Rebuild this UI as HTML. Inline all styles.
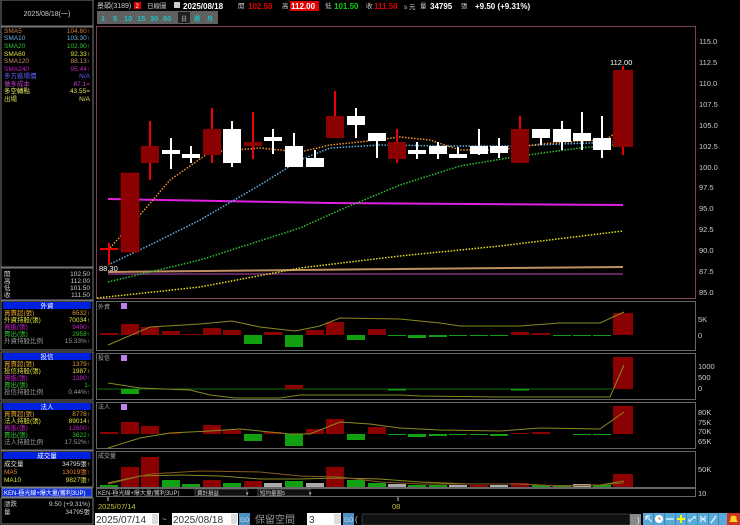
<!DOCTYPE html>
<html><head><meta charset="utf-8"><style>
html,body{margin:0;padding:0;background:#000;width:740px;height:525px;overflow:hidden}
svg{display:block}
text{font-family:"Liberation Sans","Noto Sans CJK TC",sans-serif}
</style></head><body>
<svg width="740" height="525" viewBox="0 0 740 525" xmlns="http://www.w3.org/2000/svg">
<rect width="740" height="525" fill="#000"/>
<!-- left panel -->
<rect x="1" y="0" width="92" height="26" fill="#000" stroke="#777"/>
<text x="47" y="16" fill="#ccc" font-size="7" text-anchor="middle">2025/08/18(一)</text>
<rect x="1" y="27" width="92" height="240" fill="#000" stroke="#777"/>
<g font-size="6.5">
<text x="4" y="33" fill="#d08040">SMA5</text><text x="90" y="33" fill="#d08040" text-anchor="end">104.60↑</text>
<text x="4" y="40" fill="#6ab0e0">SMA10</text><text x="90" y="40" fill="#6ab0e0" text-anchor="end">103.30↑</text>
<text x="4" y="48" fill="#30c030">SMA20</text><text x="90" y="48" fill="#30c030" text-anchor="end">102.90↑</text>
<text x="4" y="56" fill="#e0e040">SMA60</text><text x="90" y="56" fill="#e0e040" text-anchor="end">92.33↑</text>
<text x="4" y="63" fill="#c09060">SMA120</text><text x="90" y="63" fill="#c09060" text-anchor="end">88.13↑</text>
<text x="4" y="71" fill="#c020c0">SMA240</text><text x="90" y="71" fill="#c020c0" text-anchor="end">95.44↑</text>
<text x="4" y="78" fill="#6060ff">多方進場價</text><text x="90" y="78" fill="#6060ff" text-anchor="end">N/A</text>
<text x="4" y="86" fill="#c040c0">做多成本</text><text x="90" y="86" fill="#c040c0" text-anchor="end">87.1=</text>
<text x="4" y="93" fill="#e0e060">多空轉點</text><text x="90" y="93" fill="#e0e060" text-anchor="end">43.55=</text>
<text x="4" y="101" fill="#e0e060">出場</text><text x="90" y="101" fill="#e0e060" text-anchor="end">N/A</text>
</g>
<rect x="1" y="268" width="92" height="32" fill="#000" stroke="#777"/>
<g font-size="6.5" fill="#ccc">
<text x="4" y="276">開</text><text x="90" y="276" text-anchor="end">102.50</text>
<text x="4" y="283">高</text><text x="90" y="283" text-anchor="end">112.00</text>
<text x="4" y="290">低</text><text x="90" y="290" text-anchor="end">101.50</text>
<text x="4" y="297">收</text><text x="90" y="297" text-anchor="end">111.50</text>
</g>
<!-- 外資 -->
<rect x="1" y="301" width="92" height="49" fill="#000" stroke="#777"/>
<rect x="3" y="302" width="88" height="7" fill="#0020e0"/>
<text x="47" y="308" fill="#fff" font-size="6.5" text-anchor="middle">外資</text>
<g font-size="6.5">
<text x="4" y="315" fill="#e0a030">買賣超(張)</text><text x="90" y="315" fill="#e0a030" text-anchor="end">6532↑</text>
<text x="4" y="322" fill="#e0e040">外資持股(張)</text><text x="90" y="322" fill="#e0e040" text-anchor="end">70034↑</text>
<text x="4" y="329" fill="#c020c0">買進(張)</text><text x="90" y="329" fill="#c020c0" text-anchor="end">9490↑</text>
<text x="4" y="336" fill="#30c030">賣出(張)</text><text x="90" y="336" fill="#30c030" text-anchor="end">2958↑</text>
<text x="4" y="343" fill="#999">外資持股比例</text><text x="90" y="343" fill="#999" text-anchor="end">15.33%↑</text>
</g>
<!-- 投信 -->
<rect x="1" y="352" width="92" height="48" fill="#000" stroke="#777"/>
<rect x="3" y="353" width="88" height="7" fill="#0020e0"/>
<text x="47" y="359" fill="#fff" font-size="6.5" text-anchor="middle">投信</text>
<g font-size="6.5">
<text x="4" y="366" fill="#e0a030">買賣超(張)</text><text x="90" y="366" fill="#e0a030" text-anchor="end">1379↑</text>
<text x="4" y="373" fill="#e0e040">投信持股(張)</text><text x="90" y="373" fill="#e0e040" text-anchor="end">1987↑</text>
<text x="4" y="380" fill="#c020c0">買進(張)</text><text x="90" y="380" fill="#c020c0" text-anchor="end">1380↑</text>
<text x="4" y="387" fill="#30c030">賣出(張)</text><text x="90" y="387" fill="#30c030" text-anchor="end">1-</text>
<text x="4" y="394" fill="#999">投信持股比例</text><text x="90" y="394" fill="#999" text-anchor="end">0.44%↑</text>
</g>
<!-- 法人 -->
<rect x="1" y="402" width="92" height="48" fill="#000" stroke="#777"/>
<rect x="3" y="403" width="88" height="7" fill="#0020e0"/>
<text x="47" y="409" fill="#fff" font-size="6.5" text-anchor="middle">法人</text>
<g font-size="6.5">
<text x="4" y="416" fill="#e0a030">買賣超(張)</text><text x="90" y="416" fill="#e0a030" text-anchor="end">8778↑</text>
<text x="4" y="423" fill="#e0e040">法人持股(張)</text><text x="90" y="423" fill="#e0e040" text-anchor="end">89014↑</text>
<text x="4" y="430" fill="#c020c0">買進(張)</text><text x="90" y="430" fill="#c020c0" text-anchor="end">12600↑</text>
<text x="4" y="437" fill="#30c030">賣出(張)</text><text x="90" y="437" fill="#30c030" text-anchor="end">3822↑</text>
<text x="4" y="444" fill="#999">法人持股比例</text><text x="90" y="444" fill="#999" text-anchor="end">17.52%↑</text>
</g>
<!-- 成交量 -->
<rect x="1" y="451" width="92" height="36" fill="#000" stroke="#777"/>
<rect x="3" y="452" width="88" height="7" fill="#0020e0"/>
<text x="47" y="458" fill="#fff" font-size="6.5" text-anchor="middle">成交量</text>
<g font-size="6.5">
<text x="4" y="466" fill="#e0e0e0">成交量</text><text x="90" y="466" fill="#e0e0e0" text-anchor="end">34795張↑</text>
<text x="4" y="474" fill="#e08030">MA5</text><text x="90" y="474" fill="#e08030" text-anchor="end">13019張↑</text>
<text x="4" y="482" fill="#e0e040">MA10</text><text x="90" y="482" fill="#e0e040" text-anchor="end">9827張↑</text>
</g>
<rect x="2" y="488" width="90" height="9" fill="#1030e0" stroke="#888"/>
<text x="4" y="495" fill="#fff" font-size="6">KEN-極光線+爆大量(獲利3UP)</text>
<rect x="1" y="498" width="92" height="26" fill="#000" stroke="#777"/>
<g font-size="6.5" fill="#ccc">
<text x="4" y="506">漲跌</text><text x="90" y="506" text-anchor="end">9.50 (+9.31%)</text>
<text x="4" y="514">量</text><text x="90" y="514" text-anchor="end">34795張</text>
</g>

<!-- header -->
<g font-size="8">
<text x="97" y="8" fill="#ccc" font-size="7">景碩(3189)</text>
<rect x="134" y="2" width="7" height="7" fill="#e00000"/><text x="135.5" y="8" fill="#fff" font-size="6">2</text>
<text x="147" y="8" fill="#ccc" font-size="6.5">日線圖</text>
<rect x="174" y="2" width="6" height="6" fill="#ccc"/>
<text x="183" y="9" fill="#fff" font-weight="bold">2025/08/18</text>
<text x="238" y="8" fill="#ccc" font-size="6.5">開</text>
<text x="248" y="9" fill="#e00000" font-weight="bold">102.50</text>
<text x="282" y="8" fill="#ccc" font-size="6.5">高</text>
<rect x="290" y="1" width="29" height="10" fill="#e00000"/>
<text x="291" y="9" fill="#fff" font-weight="bold">112.00</text>
<text x="325" y="8" fill="#ccc" font-size="6.5">低</text>
<text x="334" y="9" fill="#10d010" font-weight="bold">101.50</text>
<text x="366" y="8" fill="#ccc" font-size="6.5">收</text>
<text x="374" y="9" fill="#e00000" font-weight="bold">111.50</text>
<text x="404" y="9" fill="#ccc" font-size="6.5">s 元</text>
<text x="420" y="8" fill="#ccc" font-size="6.5">量</text>
<text x="430" y="9" fill="#fff" font-weight="bold">34795</text>
<text x="461" y="8" fill="#ccc" font-size="6.5">張</text>
<text x="475" y="9" fill="#fff" font-weight="bold">+9.50 (+9.31%)</text>
</g>
<g font-size="7.5" font-weight="bold" fill="#20c0c0">
<rect x="97" y="11" width="121" height="13" fill="#606060"/>
<rect x="178" y="12" width="12" height="11" fill="#202020"/>
<text x="101" y="21">1</text><text x="113" y="21">5</text><text x="124" y="21">10</text><text x="137" y="21">15</text><text x="150" y="21">30</text><text x="163" y="21">60</text>
<text x="181" y="21" fill="#888" font-size="6">日</text><text x="194" y="21" font-size="6">週</text><text x="207" y="21" font-size="6">月</text>
</g>

<!-- main chart frame -->
<rect x="96.5" y="26.5" width="599" height="272" fill="none" stroke="#804060"/>
<g font-size="7.5" fill="#ccc">
<text x="699" y="44">115.0</text><text x="699" y="65">112.5</text><text x="699" y="86">110.0</text>
<text x="699" y="107">107.5</text><text x="699" y="128">105.0</text><text x="699" y="149">102.5</text>
<text x="699" y="170">100.0</text><text x="699" y="190">97.5</text><text x="699" y="211">95.0</text>
<text x="699" y="232">92.5</text><text x="699" y="253">90.0</text><text x="699" y="274">87.5</text><text x="699" y="295">85.0</text>
</g>
<!-- MA lines -->
<polyline points="108,199 330,203 623,205" fill="none" stroke="#e020e0" stroke-width="2"/>
<polyline points="108,272 400,269 623,267" fill="none" stroke="#c09060" stroke-width="2"/>
<line x1="108" y1="274" x2="623" y2="274" stroke="#803080" stroke-width="1.5"/>
<polyline points="97,298 200,287 300,268 400,256 500,246 623,231" fill="none" stroke="#e0e020" stroke-width="1.5" stroke-dasharray="1.5,1.5"/>
<polyline points="108,282 200,260 300,228 340,210 400,185 460,166 520,156 580,148 623,144" fill="none" stroke="#30c030" stroke-width="1.5" stroke-dasharray="1.5,1.5"/>
<polyline points="108,265 150,245 200,220 260,185 300,160 330,148 380,145 450,146 520,146 560,144 623,142" fill="none" stroke="#60b0e0" stroke-width="1.5" stroke-dasharray="1.5,1.5"/>
<polyline points="108,250 140,215 170,180 210,152 260,148 300,152 330,145 360,142 400,137 430,140 460,150 500,150 540,144 580,141 605,140 623,128" fill="none" stroke="#f09030" stroke-width="1.5" stroke-dasharray="1.5,1.5"/>
<!-- candles -->
<g fill="#fff">
<rect x="108" y="243" width="2" height="22" fill="#f00000"/><rect x="100" y="248" width="18" height="2" fill="#f00000"/>
<rect x="121" y="173" width="18" height="79" fill="#8b0000" stroke="#c00000" stroke-width="0.5"/>
<rect x="149" y="121" width="2" height="59" fill="#f00000"/><rect x="141" y="146" width="18" height="17" fill="#8b0000"/>
<rect x="170" y="138" width="2" height="31"/><rect x="162" y="150" width="18" height="4"/>
<rect x="190" y="146" width="2" height="17"/><rect x="182" y="154" width="18" height="4"/>
<rect x="211" y="108" width="2" height="55" fill="#f00000"/><rect x="203" y="129" width="18" height="26" fill="#8b0000"/>
<rect x="231" y="121" width="2" height="46"/><rect x="223" y="129" width="18" height="34"/>
<rect x="252" y="112" width="2" height="47" fill="#f00000"/><rect x="244" y="142" width="18" height="4" fill="#8b0000"/>
<rect x="272" y="129" width="2" height="25"/><rect x="264" y="137" width="18" height="4"/>
<rect x="293" y="133" width="2" height="34"/><rect x="285" y="146" width="18" height="21"/>
<rect x="314" y="150" width="2" height="17"/><rect x="306" y="158" width="18" height="9"/>
<rect x="334" y="91" width="2" height="47" fill="#f00000"/><rect x="326" y="116" width="18" height="22" fill="#8b0000"/>
<rect x="355" y="108" width="2" height="30"/><rect x="347" y="116" width="18" height="9"/>
<rect x="376" y="133" width="2" height="25"/><rect x="368" y="133" width="18" height="8"/>
<rect x="396" y="129" width="2" height="34" fill="#f00000"/><rect x="388" y="142" width="18" height="17" fill="#8b0000"/>
<rect x="416" y="142" width="2" height="17"/><rect x="408" y="150" width="18" height="4"/>
<rect x="437" y="142" width="2" height="17"/><rect x="429" y="146" width="18" height="8"/>
<rect x="457" y="147" width="2" height="11"/><rect x="449" y="154" width="18" height="4"/>
<rect x="478" y="129" width="2" height="26"/><rect x="470" y="146" width="18" height="8"/>
<rect x="498" y="138" width="2" height="20"/><rect x="490" y="146" width="18" height="7"/>
<rect x="519" y="116" width="2" height="13" fill="#f00000"/><rect x="511" y="129" width="18" height="34" fill="#8b0000"/>
<rect x="540" y="129" width="2" height="16"/><rect x="532" y="129" width="18" height="9"/>
<rect x="561" y="121" width="2" height="29"/><rect x="553" y="129" width="18" height="13"/>
<rect x="581" y="112" width="2" height="38"/><rect x="573" y="133" width="18" height="8"/>
<rect x="601" y="116" width="2" height="42"/><rect x="593" y="138" width="18" height="12"/>
<rect x="622" y="66" width="2" height="89" fill="#f00000"/><rect x="613" y="70" width="20" height="77" fill="#8b0000"/>
</g>
<text x="610" y="65" fill="#fff" font-size="7.5">112.00</text>
<text x="99" y="271" fill="#fff" font-size="7.5">88.30</text>

<!-- sub panels -->
<g fill="none" stroke="#666">
<rect x="96.5" y="301.5" width="599" height="49"/>
<rect x="96.5" y="353.5" width="599" height="46"/>
<rect x="96.5" y="402.5" width="599" height="46"/>
<rect x="96.5" y="451.5" width="599" height="36"/>
<rect x="96.5" y="488.5" width="599" height="8"/>
</g>
<g font-size="6" fill="#aaa">
<text x="98" y="309">外資</text><text x="98" y="360">投信</text><text x="98" y="409">法人</text><text x="98" y="458">成交量</text>
</g>
<rect x="121" y="303" width="6" height="6" fill="#c080f0"/><rect x="121" y="355" width="6" height="6" fill="#c080f0"/><rect x="121" y="404" width="6" height="6" fill="#c080f0"/>
<g font-size="7.5" fill="#ccc">
<text x="698" y="322">5K</text><text x="698" y="338">0</text>
<text x="698" y="369">1000</text><text x="698" y="380">500</text><text x="698" y="391">0</text>
<text x="698" y="415">80K</text><text x="698" y="425">75K</text><text x="698" y="434">70K</text><text x="698" y="444">65K</text>
<text x="698" y="472">50K</text><text x="698" y="496">10</text>
</g>
<!-- panel1 bars zero 335 -->
<g fill="#8b0000">
<rect x="100" y="333" width="18" height="2"/><rect x="121" y="324" width="18" height="11"/><rect x="141" y="327" width="18" height="8"/><rect x="162" y="331" width="18" height="4"/><rect x="182" y="334" width="18" height="1"/><rect x="203" y="328" width="18" height="7"/><rect x="223" y="330" width="18" height="5"/><rect x="264" y="332" width="18" height="3"/><rect x="306" y="330" width="18" height="5"/><rect x="326" y="322" width="18" height="13"/><rect x="368" y="329" width="18" height="6"/><rect x="511" y="332" width="18" height="3"/><rect x="532" y="333" width="18" height="2"/><rect x="613" y="313" width="20" height="22"/>
</g>
<g fill="#10a010">
<rect x="244" y="335" width="18" height="9"/><rect x="285" y="335" width="18" height="12"/><rect x="347" y="335" width="18" height="5"/><rect x="388" y="335" width="18" height="1"/><rect x="408" y="335" width="18" height="3"/><rect x="429" y="335" width="18" height="2"/><rect x="449" y="335" width="18" height="1"/><rect x="470" y="335" width="18" height="1"/><rect x="490" y="335" width="18" height="1"/><rect x="553" y="335" width="18" height="1"/><rect x="573" y="335" width="18" height="1"/><rect x="593" y="335" width="18" height="1"/>
</g>
<polyline points="108,345 150,327 200,324 232,321 260,327 295,331 320,326 340,318 400,319 440,323 460,326 520,326 560,323 600,323 624,312" fill="none" stroke="#8a8a20" stroke-width="1"/>
<!-- panel2 zero 389 -->
<line x1="97" y1="389" x2="612" y2="389" stroke="#107010"/>
<rect x="121" y="389" width="18" height="5" fill="#10a010"/>
<rect x="285" y="385" width="18" height="4" fill="#8b0000"/>
<rect x="388" y="389" width="18" height="1.5" fill="#10a010"/>
<rect x="511" y="389" width="18" height="1.5" fill="#10a010"/>
<rect x="613" y="357" width="20" height="32" fill="#8b0000"/>
<polyline points="108,383 140,388 190,390 210,395 235,398 280,398 300,395 400,395 420,396 500,397 610,397 624,365" fill="none" stroke="#8a8a20" stroke-width="1"/>
<!-- panel3 zero 434 -->
<g fill="#8b0000">
<rect x="100" y="432" width="18" height="2"/><rect x="121" y="422" width="18" height="12"/><rect x="141" y="426" width="18" height="8"/><rect x="162" y="433" width="18" height="1"/><rect x="203" y="425" width="18" height="9"/><rect x="223" y="430" width="18" height="4"/><rect x="264" y="432" width="18" height="2"/><rect x="306" y="429" width="18" height="5"/><rect x="326" y="419" width="18" height="15"/><rect x="368" y="427" width="18" height="7"/><rect x="511" y="433" width="18" height="1"/><rect x="532" y="432" width="18" height="2"/><rect x="613" y="406" width="20" height="28"/>
</g>
<g fill="#10a010">
<rect x="244" y="434" width="18" height="7"/><rect x="285" y="434" width="18" height="12"/><rect x="347" y="434" width="18" height="6"/><rect x="388" y="434" width="18" height="1"/><rect x="408" y="434" width="18" height="3"/><rect x="429" y="434" width="18" height="2"/><rect x="449" y="434" width="18" height="1"/><rect x="470" y="434" width="18" height="1"/><rect x="490" y="434" width="18" height="2"/><rect x="573" y="434" width="18" height="1"/><rect x="593" y="434" width="18" height="1"/>
</g>
<polyline points="108,448 140,438 170,433 210,431 240,429 260,431 290,434 310,434 340,422 370,424 400,428 440,430 500,431 540,428 600,429 624,412" fill="none" stroke="#8a8a20" stroke-width="1"/>
<!-- volume -->
<g fill="#8b0000">
<rect x="121" y="467" width="18" height="20"/><rect x="141" y="457" width="18" height="30"/><rect x="203" y="480" width="18" height="7"/><rect x="244" y="481" width="18" height="6"/><rect x="326" y="467" width="18" height="20"/><rect x="470" y="485" width="18" height="2"/><rect x="511" y="483" width="18" height="4"/><rect x="613" y="474" width="20" height="13"/>
</g>
<g fill="#10a010">
<rect x="100" y="485" width="18" height="2"/><rect x="162" y="480" width="18" height="7"/><rect x="182" y="484" width="18" height="3"/><rect x="223" y="483" width="18" height="4"/><rect x="285" y="481" width="18" height="6"/><rect x="347" y="480" width="18" height="7"/><rect x="368" y="483" width="18" height="4"/><rect x="408" y="485" width="18" height="2"/><rect x="429" y="485" width="18" height="2"/><rect x="532" y="485" width="18" height="2"/><rect x="553" y="485" width="18" height="2"/><rect x="593" y="485" width="18" height="2"/>
</g>
<g fill="#aaa">
<rect x="264" y="483" width="18" height="4"/><rect x="306" y="483" width="18" height="4"/><rect x="388" y="484" width="18" height="3"/><rect x="449" y="485" width="18" height="2"/><rect x="490" y="485" width="18" height="2"/><rect x="573" y="484" width="18" height="3"/>
</g>
<polyline points="108,483 140,476 180,475 220,476 260,479 300,479 340,478 380,479 420,482 470,484 520,484 560,486 600,485 624,481" fill="none" stroke="#8a8a20" stroke-width="1"/>
<polyline points="108,484 150,474 200,471 260,472 300,476 340,477 380,482 420,484 470,484 520,484 560,486 600,485 624,483" fill="none" stroke="#8a5a20" stroke-width="1"/>
<!-- toolbar row -->
<text x="98" y="495" fill="#ccc" font-size="6">KEN-極光線+爆大量(獲利3UP)</text>
<rect x="195" y="489" width="52" height="7" fill="#111" stroke="#888" stroke-width="0.5"/><text x="197" y="495" fill="#ccc" font-size="5.5">費計損益</text><text x="246" y="495" fill="#ccc" font-size="5">▾</text>
<rect x="258" y="489" width="52" height="7" fill="#111" stroke="#888" stroke-width="0.5"/><text x="260" y="495" fill="#ccc" font-size="5.5">短均量圖5</text><text x="309" y="495" fill="#ccc" font-size="5">▾</text>
<!-- date row -->
<line x1="108" y1="497" x2="108" y2="501" stroke="#ccc"/>
<line x1="398" y1="497" x2="398" y2="501" stroke="#ccc"/>
<text x="98" y="509" fill="#c0c040" font-size="7.5">2025/07/14</text>
<text x="392" y="509" fill="#c0c040" font-size="7.5">08</text>
<!-- bottom bar -->
<rect x="94" y="512" width="646" height="13" fill="#000"/>
<rect x="95" y="513" width="64" height="12" fill="#fff"/>
<text x="96" y="523" fill="#333" font-size="10" font-family="Liberation Serif">2025/07/14</text>
<rect x="152" y="514" width="6" height="10" fill="#ddd"/>
<text x="162" y="522" fill="#ccc" font-size="8">~</text>
<rect x="172" y="513" width="66" height="12" fill="#fff"/>
<text x="173" y="523" fill="#333" font-size="10" font-family="Liberation Serif">2025/08/18</text>
<rect x="231" y="514" width="6" height="10" fill="#ddd"/>
<rect x="239" y="513" width="11" height="12" fill="#4a90c0"/><text x="240" y="522" fill="#cde" font-size="6">GO</text>
<text x="255" y="523" fill="#999" font-size="10">保留空間</text>
<rect x="307" y="513" width="34" height="12" fill="#fff"/><text x="309" y="523" fill="#333" font-size="10" font-family="Liberation Serif">3</text>
<rect x="334" y="514" width="7" height="10" fill="#ddd"/>
<rect x="343" y="513" width="11" height="12" fill="#4a90c0"/><text x="344" y="522" fill="#cde" font-size="6">GO</text>
<text x="355" y="522" fill="#ccc" font-size="8">(</text>
<rect x="362" y="514" width="268" height="11" fill="#111" stroke="#666" stroke-width="0.5"/>
<rect x="630" y="514" width="11" height="11" fill="#888"/>
<text x="637" y="523" fill="#eee" font-size="8">)</text>
<rect x="643" y="513" width="84" height="12" fill="#58a8d8"/>
<line x1="653.5" y1="513" x2="653.5" y2="525" stroke="#3a88b8"/><line x1="664.5" y1="513" x2="664.5" y2="525" stroke="#3a88b8"/><line x1="675.5" y1="513" x2="675.5" y2="525" stroke="#3a88b8"/><line x1="686.5" y1="513" x2="686.5" y2="525" stroke="#3a88b8"/><line x1="697.5" y1="513" x2="697.5" y2="525" stroke="#3a88b8"/><line x1="708.5" y1="513" x2="708.5" y2="525" stroke="#3a88b8"/><line x1="718.5" y1="513" x2="718.5" y2="525" stroke="#3a88b8"/>
<path d="M646,516 L652,522 M646,516 L646,520 M646,516 L650,516" stroke="#e0f0ff" stroke-width="1.2" fill="none"/>
<circle cx="659" cy="519" r="4" fill="#fff"/><path d="M659,517 L659,519 L661,519" stroke="#e07020" fill="none"/>
<rect x="666" y="518" width="8" height="2" fill="#b0e0ff"/>
<rect x="677" y="518" width="8" height="2" fill="#ff0"/><rect x="680" y="515" width="2" height="8" fill="#ff0"/>
<path d="M689,522 L695,516 M689,522 L689,519 M695,516 L695,519" stroke="#e0f0ff" fill="none"/>
<path d="M700,516 L706,522 M706,516 L700,522 M700,519 L706,519" stroke="#e0f0ff" fill="none"/>
<path d="M711,523 L716,516" stroke="#e0f0ff" stroke-width="1.5"/>
<rect x="727" y="513" width="13" height="12" fill="#d03020"/>
<path d="M729,522 L738,522 L736.5,520 L736.5,517 Q733.5,514 730.5,517 L730.5,520 Z" fill="#ffd020"/>
</svg>
</body></html>
